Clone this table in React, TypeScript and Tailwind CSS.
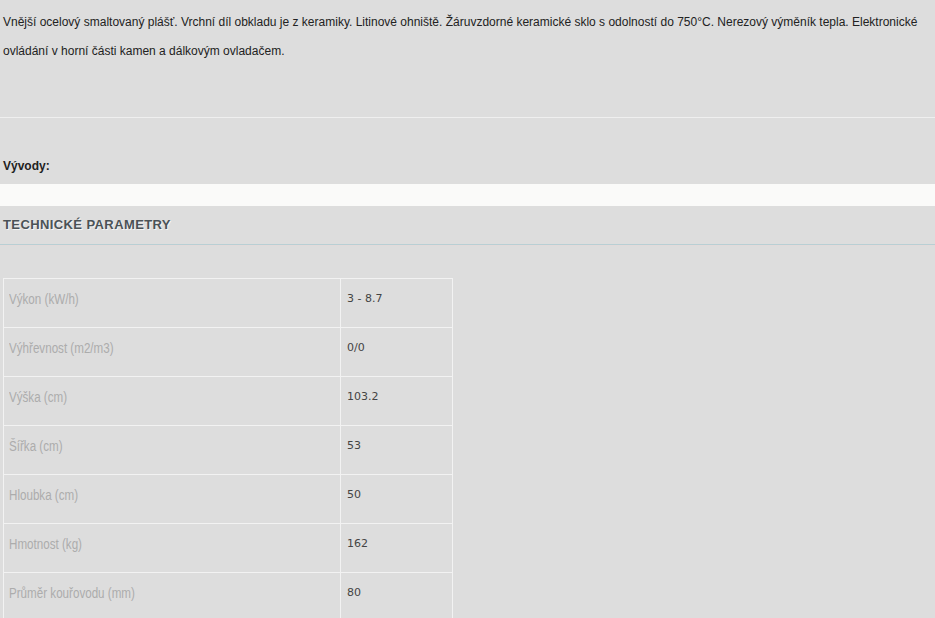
const params: [string, string][] = [
  ['Výkon (kW/h)', '3 - 8.7'],
  ['Výhřevnost (m2/m3)', '0/0'],
  ['Výška (cm)', '103.2'],
  ['Šířka (cm)', '53'],
  ['Hloubka (cm)', '50'],
  ['Hmotnost (kg)', '162'],
  ['Průměr kouřovodu (mm)', '80'],
];

export default function App() {
  return (
    <div className="min-h-[618px] w-[935px] overflow-hidden bg-[#dddddd] font-['Liberation_Sans',Arial,sans-serif] text-[12px] text-[#222]">
      {/* popis */}
      <div className="h-[118px] border-b border-[#efefef] pl-[3px] pr-[2px] pt-[8px]">
        <p className="leading-[29px]">
          Vnější ocelový smaltovaný plášť. Vrchní díl obkladu je z keramiky. Litinové ohniště. Žáruvzdorné keramické sklo s odolností do 750°C. Nerezový výměník tepla. Elektronické ovládání v horní části kamen a dálkovým ovladačem.
        </p>
      </div>

      {/* vyvody */}
      <div className="flex h-[66px] items-end pb-[9px] pl-[3px]">
        <span className="font-bold text-[#222]">Vývody:</span>
      </div>
      <div className="h-[22px] bg-[#fafaf9]" />

      {/* tech. parametry */}
      <div className="flex h-[39px] items-center border-b border-[#b8cfd4] pl-[3px]">
        <h2 className="text-[13px] font-bold uppercase tracking-[0.4px] text-[#4b5257] [text-shadow:1px_1px_0_#f4f4f4]">
          Technické parametry
        </h2>
      </div>
      <div className="h-px bg-[#e2dada]" />

      <div className="pl-[3px] pt-[32px]">
        <table className="w-[450px] border-collapse border border-[#f2f2f2]">
          <tbody>
            {params.map(([label, value]) => (
              <tr key={label} className="h-[49px] border-b border-[#f2f2f2]">
                <td className="w-[337px] border-r border-[#f2f2f2] pb-[8px] pl-[5px] align-middle text-[14px] text-[#acacac]">
                  <span className="inline-block origin-left scale-x-[0.83] whitespace-nowrap">{label}</span>
                </td>
                <td className="pb-[8px] pl-[6px] align-middle font-['DejaVu_Sans',Verdana,sans-serif] text-[11px] text-[#444]">
                  {value}
                </td>
              </tr>
            ))}
          </tbody>
        </table>
      </div>
    </div>
  );
}
